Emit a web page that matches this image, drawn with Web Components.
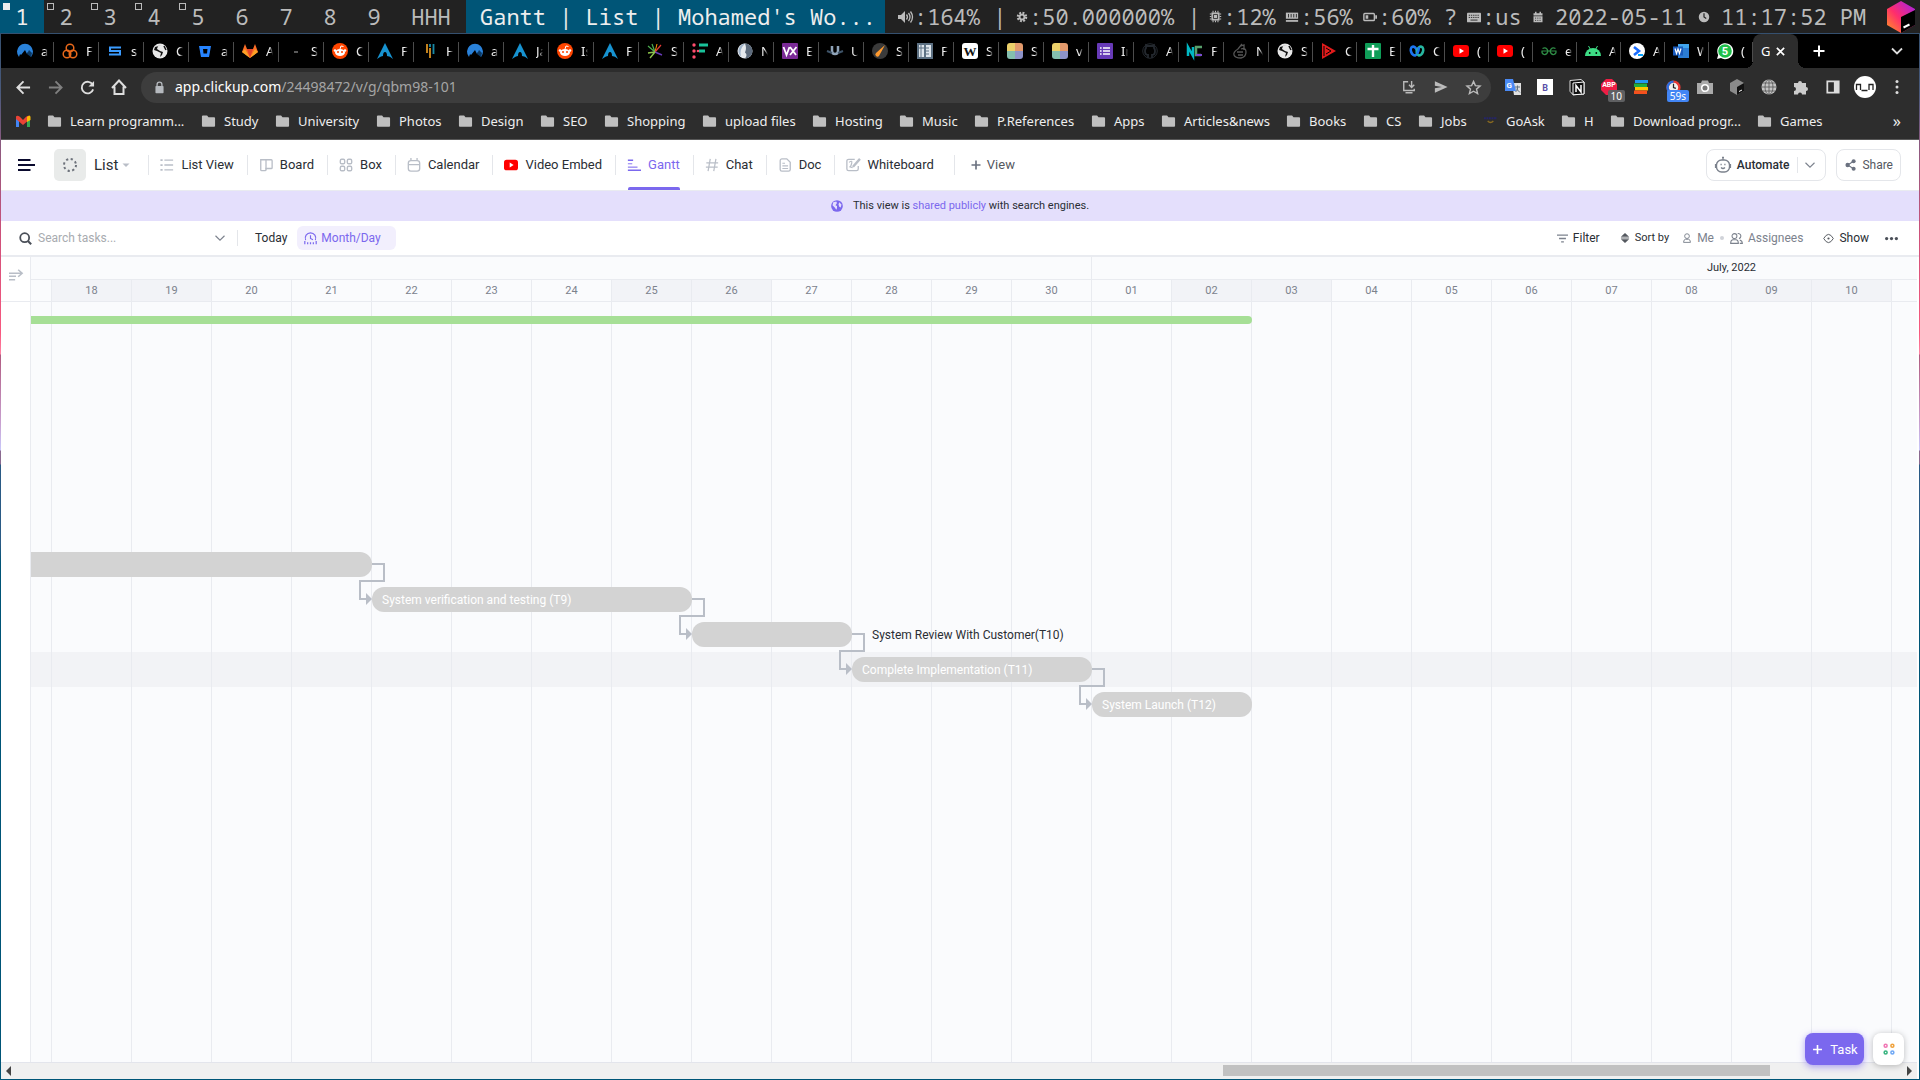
<!DOCTYPE html>
<html lang="en">
<head>
<meta charset="utf-8">
<title>Gantt | List | Mohamed's Workspace</title>
<style>
  html, body { margin: 0; height: 100%; }
  body { background: #222; overflow: hidden; font-family: Roboto, "Liberation Sans", sans-serif; }
</style>
</head>
<body>
<desk-top></desk-top>
<script>
const ICONS = {
  /* status bar */
  volume: '<path d="M1 6h3l4-4v12l-4-4H1z" fill="#bbb"/><path d="M9.500 5.500q2 2.500 0 5M11.500 4q3 4 0 8M13.500 2.500q4 5.500 0 11" stroke="#bbb" fill="none" stroke-width="1.300"/>',
  gear: '<circle cx="8" cy="8" r="4.500" fill="#bbb"/><circle cx="8" cy="8" r="5.500" fill="none" stroke="#bbb" stroke-width="3" stroke-dasharray="2.500 1.820"/><circle cx="8" cy="8" r="2" fill="#222"/>',
  cpu: '<path d="M3 3h10v10H3z" fill="#bbb"/><path d="M5.500 5.500h5v5h-5z" fill="none" stroke="#222"/><path d="M5 1v2M5 13v2M8 1v2M8 13v2M11 1v2M11 13v2M1 5h2M1 8h2M1 11h2M13 5h2M13 8h2M13 11h2" stroke="#bbb" stroke-width="1.300"/>',
  memory: '<path d="M1 3h14v7H1z" fill="#bbb"/><path d="M4 4.500v4M7 4.500v4M10 4.500v4M13 4.500v4" stroke="#222"/><path d="M1 11.500h14v2H1z" fill="#bbb"/>',
  battery: '<rect x="1" y="4" width="12" height="8" rx="1" fill="none" stroke="#bbb" stroke-width="1.600"/><path d="M3 6h3v4H3zM14 6h2v4h-2z" fill="#bbb"/>',
  keyboard: '<rect x="0" y="3" width="16" height="11" rx="1" fill="#bbb"/><path d="M2 6h12M2 8.500h12" stroke="#222" stroke-dasharray="1.500 1"/><path d="M4 11.500h8" stroke="#222"/>',
  calsolid: '<path d="M2 3h12v3H2zM2 7h12v8H2zM4 1h2v3H4zM10 1h2v3h-2z" fill="#bbb"/><path d="M4 9.500h8M4 12.500h8" stroke="#222" stroke-dasharray="1.500 1.500"/>',
  clocksolid: '<circle cx="8" cy="8" r="7" fill="#bbb"/><path d="M8 3v5l3 2" stroke="#222" fill="none" stroke-width="1.600"/>',
  toolbox: '<defs><linearGradient id="g" x1="0" y1="1" x2="1" y2="0"><stop offset="0" stop-color="#ff9a1f"/><stop offset=".45" stop-color="#ff2d6c"/><stop offset="1" stop-color="#a020f0"/></linearGradient></defs><path d="M14 0L28 8v16L14 32 0 24V8z" fill="url(#g)"/><path d="M14 16L28 9v15L14 32z" fill="#000"/><path d="M16.500 26.500l6-3" stroke="#fff" stroke-width="2"/>',
  /* favicons */
  nord: '<path d="M2 14a8 8 0 1 1 12 0l-3-5-1 2-2-4-4 5-1-1z" fill="#2a82da"/><path d="M10 11l4 3 1-4-3-3z" fill="#0b3a66"/>',
  rings: '<g fill="none" stroke="#e8681a" stroke-width="1.500"><circle cx="8" cy="5" r="3.800"/><circle cx="5" cy="11" r="3.800"/><circle cx="11" cy="11" r="3.800"/></g>',
  sline: '<path d="M14 4.500H3V8h10v3.500H2" fill="none" stroke="#3b9cff" stroke-width="2"/>',
  globe: '<circle cx="8" cy="8" r="7.500" fill="#e8e8e8"/><path d="M10 2L6 3 5 6l3 2 3 1-1 3-2 2 1-4-4-2-3-1 1-3z" fill="#111"/><path d="M12 3l2 4" stroke="#111" stroke-width="1.500"/>',
  bitbucket: '<path d="M2 3h12l-2 11H4z" fill="#2684ff"/><path d="M6 6h4.500L10 10.500H6.500z" fill="#000"/>',
  gitlab: '<path d="M8 15L0 9l3-8 2 5h6l2-5 3 8z" fill="#fc6d26"/><path d="M8 15L5 6h6z" fill="#e24329"/><path d="M0 9l3-3 5 9zM16 9l-3-3-5 9z" fill="#fca326"/>',
  dash: '<path d="M7 9h4" stroke="#777" stroke-width="1.500"/>',
  reddit: '<circle cx="8" cy="8" r="8" fill="#ff4500"/><ellipse cx="8" cy="9.500" rx="5" ry="3.500" fill="#fff"/><circle cx="3" cy="7.500" r="1.300" fill="#fff"/><circle cx="13" cy="7.500" r="1.300" fill="#fff"/><circle cx="6" cy="9" r="1" fill="#ff4500"/><circle cx="10" cy="9" r="1" fill="#ff4500"/><path d="M8 6l1-3 2.500.5" stroke="#fff" fill="none"/>',
  arch: '<path d="M8 0L0 16q4-3 6-3 0-4 2-4t2 4q3 0 6 3z" fill="#1793d1"/>',
  bars: '<path d="M5 1v9M8 5v10" stroke="#d89020" stroke-width="1.800"/><path d="M8 1v3M11.500 1v10" stroke="#1a8aa5" stroke-width="1.800"/>',
  splash: '<path d="M8 9L1 3M8 9L5 1" stroke="#4caf50" stroke-width="1.200"/><path d="M8 9L10 1" stroke="#ff9800"/><path d="M8 9L14 2" stroke="#e53935" stroke-width="1.200"/><path d="M8 9l7 3" stroke="#673ab7" stroke-width="1.400"/><path d="M8 9L1 10M8 9l-5 6" stroke="#8bc34a" stroke-width="1.400"/>',
  fdots: '<path d="M7 2h9M7 8h6" stroke="#19c29a" stroke-width="3"/><g fill="#ff4d6d"><circle cx="2" cy="2" r="1.700"/><circle cx="2" cy="8" r="1.700"/><circle cx="2" cy="14" r="1.700"/><circle cx="6" cy="8" r="1.300"/></g>',
  silver: '<circle cx="8" cy="8" r="7.500" fill="#e6eaee"/><path d="M8 .5a7.500 7.500 0 0 1 0 15q3-4 0-6 2-4 0-9z" fill="#5d6b7c"/><path d="M8 .5a7.500 7.500 0 0 0-4 13q-2-7 4-13z" fill="#9fb2c8"/>',
  vx: '<rect width="16" height="16" rx="1" fill="#7b2a97"/><path d="M1.500 4l3 8 3-8M8 4l6 8M14.500 4L8 12" stroke="#fff" stroke-width="1.800" fill="none"/>',
  umark: '<path d="M5 3v5q0 3 3 3t3-3V3" stroke="#8fa3b8" stroke-width="2.500" fill="none"/><path d="M0 8l5 2M16 8l-5 2" stroke="#3e5368" stroke-width="2"/>',
  comet: '<circle cx="8" cy="8" r="8" fill="#3a3a3a"/><path d="M13 2L4 10a2 2 0 0 0 3 3z" fill="#ff9a2e"/>',
  book: '<rect width="16" height="16" fill="#5d7183"/><path d="M2 2h5v12H2zM9 2h5v12H9z" fill="#dfe6ec"/><path d="M2 5h5M9 5h3M9 8h3M9 11h3M4 2v12" stroke="#5d7183"/>',
  wiki: '<rect width="16" height="16" rx="3" fill="#fff"/><text x="8" y="13" text-anchor="middle" font-family="Liberation Serif,serif" font-weight="700" font-size="13" fill="#111">W</text>',
  quad: '<path d="M0 3a3 3 0 0 1 3-3h5v8H0z" fill="#ecd06a"/><path d="M8 0h5a3 3 0 0 1 3 3v5H8z" fill="#e39a6c"/><path d="M0 8h8v8H3a3 3 0 0 1-3-3z" fill="#84bfae"/><path d="M8 8h8v5a3 3 0 0 1-3 3H8z" fill="#8e93c9"/>',
  forms: '<rect width="16" height="16" rx="1" fill="#673ab7"/><path d="M6 5h7M6 8h7M6 11h7" stroke="#fff" stroke-width="1.600"/><path d="M3 5h1.600M3 8h1.600M3 11h1.600" stroke="#fff" stroke-width="1.600"/>',
  github: '<path d="M6 15v-3q-3 0-3-4 0-2 1-3V2l3 1h2l3-1v3q1 1 1 3 0 4-3 4v3" stroke="#24292f" fill="none" stroke-width="1.800"/><circle cx="8" cy="8" r="7.300" fill="none" stroke="#24292f"/>',
  nc: '<path d="M1 13V4l5 9V4" stroke="#00b8c4" stroke-width="2.500" fill="none"/><path d="M15 4H9v8h5" stroke="#58a06b" stroke-width="2.500" fill="none"/><path d="M9 12h6" stroke="#7a4bd0" stroke-width="2"/>',
  gnu: '<path d="M10 1L6 6q-5 3-4 6t7 3q5-1 5-6T9 6M5 9h6M6 12h5M9 3l3-1v5" stroke="#555" fill="none" stroke-width="1.300"/>',
  redplay: '<path d="M1 0l14 8L1 16z" fill="#e11b1b"/><path d="M5 5l5 3-5 3M3 3v10" stroke="#000" fill="none"/>',
  sheet: '<rect width="16" height="16" rx="1" fill="#0f9d58"/><path d="M8 2v12M2.500 6h11" stroke="#fff" stroke-width="2.400"/>',
  webex: '<ellipse cx="5" cy="8" rx="3" ry="4.500" transform="rotate(-20 5 8)" stroke="#1c75f0" stroke-width="2.600" fill="none"/><ellipse cx="11" cy="8" rx="3" ry="4.500" transform="rotate(20 11 8)" stroke="#27b7a0" stroke-width="2.600" fill="none"/><path d="M8 11q2-3 2-7" stroke="#1c75f0" stroke-width="2.400" fill="none"/>',
  youtube: '<rect y="2" width="16" height="12" rx="3" fill="#f00"/><path d="M6.500 5.200v5.600L11 8z" fill="#fff"/>',
  gfg: '<path d="M1.500 5.500q4-2 5.500 2.500-1 4-4 3.500-2.500-1-2-3.500h14q.5 2.500-2 3.500-3 .5-4-3.500 1.500-4.500 5.500-2.500" stroke="#2f8d46" stroke-width="1.200" fill="none"/>',
  android: '<path d="M0 13a8 8 0 0 1 16 0z" fill="#3ddc84"/><path d="M3.500 3l2 3.500M12.500 3l-2 3.500" stroke="#3ddc84"/><circle cx="4.700" cy="10" r=".9" fill="#000"/><circle cx="11.300" cy="10" r=".9" fill="#000"/>',
  shell: '<circle cx="8" cy="8" r="8" fill="#fff"/><path d="M5 4l5 4-5 4" stroke="#1a6cff" stroke-width="2.600" fill="none"/><path d="M9 12h5" stroke="#00a2ff" stroke-width="2"/>',
  word: '<path d="M5 1h10a1 1 0 0 1 1 1v13H5z" fill="#2b7cd3"/><path d="M5 1h11v4H5z" fill="#41a5ee"/><path d="M0 3.500h10v9H0z" fill="#185abd"/><path d="M2 5.500l1.500 5L5 6l1.500 4.500L8 5.500" stroke="#fff" stroke-width="1.200" fill="none"/>',
  whats: '<path d="M0 16l1.200-4A8 8 0 1 1 4 15z" fill="#fff"/><circle cx="8" cy="8" r="6.800" fill="#1fbf4b"/><text x="8" y="12" text-anchor="middle" font-family="Roboto,sans-serif" font-size="11" font-weight="700" fill="#fff">5</text>',
  /* browser chrome */
  back: '<path d="M15 8H2M8 1.500L1.500 8 8 14.500" stroke="#dedede" stroke-width="2" fill="none"/>',
  forward: '<path d="M1 8h13M8 1.500L14.500 8 8 14.500" stroke="#808080" stroke-width="2" fill="none"/>',
  reload: '<path d="M13.500 5A6.200 6.200 0 1 0 14 10" stroke="#dedede" stroke-width="2" fill="none"/><path d="M15 1v6H9z" fill="#dedede"/>',
  home: '<path d="M1 9l7-7.500L15 9M3.500 7.500V15h9V7.500" stroke="#dedede" stroke-width="2" fill="none"/>',
  lock: '<rect x="3" y="6" width="10" height="9" rx="1" fill="#b5b9be"/><path d="M5 7V4.500a3 3 0 0 1 6 0V7" stroke="#b5b9be" stroke-width="1.600" fill="none"/>',
  install: '<path d="M7 2H2v10h12v-2M4 14.500h8M11 1v7M8 5.500L11 8.500 14 5.500" stroke="#bbb" stroke-width="1.600" fill="none"/>',
  send: '<path d="M1 1.500L15.500 8 1 14.500V9.500L9 8 1 6.500z" fill="#bbb"/>',
  star: '<path d="M8 1.500l2 4.500 5 .5-3.800 3.200 1.200 4.800L8 12l-4.400 2.500 1.200-4.800L1 6.500 6 6z" stroke="#bbb" stroke-width="1.500" fill="none"/>',
  translate: '<path d="M7 4h9v12H9z" fill="#e0e0e0"/><path d="M0 0h8l3 12H0z" fill="#4a8af4"/><text x="1.500" y="9" font-family="Roboto,sans-serif" font-weight="700" font-size="8" fill="#fff">G</text><path d="M10 8h5M12.500 6.500V8q1 3-2 5M11 9.500l4 4" stroke="#607080" fill="none"/>',
  bsquare: '<path d="M0 0h16v16H0z" fill="#fff"/><text x="8" y="11.500" text-anchor="middle" font-family="Roboto,sans-serif" font-weight="700" font-size="9" fill="#5a4fa8">B</text>',
  notion: '<path d="M1 1.500L12 .5l3 2.500v12l-11 .8-3-3.500z" fill="#111" stroke="#ddd"/><path d="M4 4l11-1v12l-11 .8z" fill="#111" stroke="#fff"/><path d="M7 13V6.500l5 6.500V6" stroke="#fff" stroke-width="1.500" fill="none"/>',
  abp: '<path d="M5 0h6l5 5v6l-5 5H5l-5-5V5z" fill="#ed1e45"/><text x="8" y="8" text-anchor="middle" font-family="Roboto,sans-serif" font-weight="700" font-size="7" fill="#fff">ABP</text>',
  stack: '<path d="M2 1h13v3H2z" fill="#2196f3"/><path d="M1 4.500h13v3.500H1z" fill="#1fae3c"/><path d="M2 8h13v3.500H2z" fill="#ffc400"/><path d="M1 11.500h13V15H1z" fill="#f4511e"/>',
  timer: '<circle cx="8" cy="8" r="6.300" fill="#eee" stroke="#e53935" stroke-width="2.600"/><path d="M8 1.700a6.300 6.300 0 0 0 0 12.600" fill="none" stroke="#2b6fe0" stroke-width="2.600"/><path d="M8 4v4l2.500 1" stroke="#222" fill="none" stroke-width="1.300"/>',
  camera: '<path d="M0 4h4l1-2.500h6L12 4h4v11H0z" fill="#aaa"/><circle cx="8" cy="9" r="3.300" fill="#777" stroke="#fff" stroke-width="1.600"/>',
  cube: '<path d="M8 0l7 4v8l-7 4-7-4V4z" fill="#8a8a8a"/><path d="M8 8l7-4v8l-7 4z" fill="#111"/><path d="M10 12.500l3-1.500" stroke="#fff"/>',
  world: '<circle cx="8" cy="8" r="7.500" fill="#c4c4c4"/><path d="M8 0v16M0 8h16M1.500 4h13M1.500 12h13" stroke="#555" stroke-width=".8" fill="none"/><ellipse cx="8" cy="8" rx="4" ry="7.500" stroke="#555" stroke-width=".8" fill="none"/>',
  puzzle: '<path d="M1 4h4a2 2 0 1 1 4 0h4v4a2 2 0 1 1 0 4v3.500H9a2 2 0 0 0-4 0H1V12a2 2 0 0 0 0-4z" fill="#ccc"/>',
  panel: '<path d="M1.500 1.500h13v13h-13z" fill="none" stroke="#ddd" stroke-width="2"/><path d="M9 2h5.500v12H9z" fill="#ddd"/>',
  avatar: '<circle cx="11" cy="11" r="11" fill="#fff"/><path d="M2.500 14V8.500h4V14M7.500 14.500h6M15 14V8.500h4V14" stroke="#222" stroke-width="1.300" fill="none"/>',
  kebab: '<g fill="#ddd"><circle cx="8" cy="2.500" r="1.500"/><circle cx="8" cy="8" r="1.500"/><circle cx="8" cy="13.500" r="1.500"/></g>',
  plusw: '<path d="M8 2.500v11M2.500 8h11" stroke="#fff" stroke-width="2"/>',
  xw: '<path d="M3.500 3.500l9 9M12.500 3.500l-9 9" stroke="#fff" stroke-width="2"/>',
  chevw: '<path d="M3 5.500l5 5 5-5" stroke="#ddd" stroke-width="1.800" fill="none"/>',
  gmail: '<path d="M1 3.500V14h3V8z" fill="#4285f4"/><path d="M15 3.500V14h-3V8z" fill="#34a853"/><path d="M1 3.500Q3 1 8 7q5-6 7-3.500V6l-7 6-7-6z" fill="#ea4335"/><path d="M12 4q3-3 3.500 0v3L12 9z" fill="#fbbc04"/>',
  folder: '<path d="M1 3a1 1 0 0 1 1-1h4.500L8 4h6a1 1 0 0 1 1 1v8a1 1 0 0 1-1 1H2a1 1 0 0 1-1-1z" fill="#bfbfbf"/>',
  goask: '<path d="M1 5h14" stroke="#25256a" stroke-width="2" stroke-dasharray="2 .7"/><path d="M5 8q3 3 6 0" stroke="#8a6a20" stroke-width="1.500" fill="none"/>',
  /* app */
  burger: '<path d="M0 3h12.500M0 8h17M0 13h12.500" stroke="#0a0a2e" stroke-width="2"/>',
  dashed: '<circle cx="8" cy="8" r="6" fill="none" stroke="#6d727b" stroke-width="2" stroke-dasharray="2.200 2.510"/>',
  caret: '<path d="M1 5h14L8 12z" fill="#b9bec7"/>',
  list: '<path d="M5 2.500h10M5 8h10M5 13.500h10" stroke="#b9bec7" stroke-width="1.500"/><path d="M.5 2.500h2.500M.5 8h2.500M.5 13.500h2.500" stroke="#b9bec7" stroke-width="2"/>',
  board: '<path d="M2 2h12a1 1 0 0 1 1 1v8a1 1 0 0 1-1 1H8v1.500a1 1 0 0 1-1 1H3a1 1 0 0 1-1-1z" fill="none" stroke="#b9bec7" stroke-width="1.500"/><path d="M8 2v11" stroke="#b9bec7" stroke-width="1.500"/>',
  box: '<g fill="none" stroke="#b9bec7" stroke-width="1.600"><rect x="1.500" y="1.500" width="5" height="5" rx="1.500"/><rect x="9.500" y="1.500" width="5" height="5" rx="1.500"/><rect x="1.500" y="9.500" width="5" height="5" rx="1.500"/><rect x="9.500" y="9.500" width="5" height="5" rx="1.500"/></g>',
  calendar: '<rect x="1.500" y="3" width="13" height="12" rx="3" fill="none" stroke="#b9bec7" stroke-width="1.500"/><path d="M2 7.500h12M4.500 0v3M11.500 0v3" stroke="#b9bec7" stroke-width="1.500"/>',
  gantt: '<path d="M1 2.500h6M1 14h15" stroke="#7b68ee" stroke-width="1.800"/><path d="M1 6.500h5" stroke="#a99cf4" stroke-width="1.600"/><path d="M1 10.500h11" stroke="#a99cf4" stroke-width="1.800"/>',
  hash: '<path d="M6 1L3.500 15M12.500 1L10 15M1.500 5.500h13.500M1 10.500h13.500" stroke="#b9bec7" stroke-width="1.400"/>',
  doc: '<path d="M2.500 3a2 2 0 0 1 2-2H10l4 4v8a2 2 0 0 1-2 2H4.500a2 2 0 0 1-2-2z" fill="none" stroke="#b9bec7" stroke-width="1.500"/><path d="M5 6h3M5 9h6.500M5 12h6.500" stroke="#b9bec7" stroke-width="1.300"/>',
  white: '<path d="M10 1.500H3a2 2 0 0 0-2 2v9a2 2 0 0 0 2 2h9a2 2 0 0 0 2-2V9" fill="none" stroke="#b9bec7" stroke-width="1.500"/><path d="M3.500 5q4-3 3 1t-2 4 3 1M8 9l7-8 1 1-7 8H8z" fill="none" stroke="#b9bec7" stroke-width="1.400"/>',
  plusg: '<path d="M8 2v12M2 8h12" stroke="#6b7280" stroke-width="2.200"/>',
  robot: '<rect x="1.500" y="3" width="13" height="12" rx="5" fill="none" stroke="#7c828d" stroke-width="1.400"/><path d="M8 3V.5M.5 7v4M15.500 7v4M6 10.500q2 2 4 0" stroke="#7c828d" stroke-width="1.200" fill="none"/><path d="M5.500 7.500h1.200M9.300 7.500h1.200M7 .5h2" stroke="#7c828d" stroke-width="1.500"/>',
  chev: '<path d="M2 5l6 6 6-6" stroke="#7c828d" stroke-width="1.500" fill="none"/>',
  share: '<g fill="#6b7280"><circle cx="3.500" cy="8" r="2.900"/><circle cx="11.500" cy="3" r="2.700"/><circle cx="11.500" cy="13" r="2.700"/></g><path d="M11.500 3l-8 5 8 5" stroke="#6b7280" stroke-width="1.400" fill="none"/>',
  earth: '<circle cx="8" cy="8" r="7.800" fill="#7b68ee"/><path d="M3 3l4-1 1 2-2 3 2 1v3l-1 2-2-3-3-3zM11 3l3 3-1 4-2-1-1-3z" fill="#e4dffc"/>',
  search: '<circle cx="7" cy="7" r="5.500" fill="none" stroke="#4a4f58" stroke-width="2.200"/><path d="M11 11l4 4" stroke="#4a4f58" stroke-width="2.500"/>',
  period: '<path d="M2 10a6.500 6.500 0 1 1 12 0M8 4v4l3 1.500" fill="none" stroke="#7b68ee" stroke-width="1.400"/><path d="M1 11v4M4.500 12.500V15M8 12.500V15M11.500 12.500V15M15 11v4" stroke="#7b68ee" stroke-width="1.500"/>',
  filter: '<path d="M0 3h16M3 8h10M6 13h4" stroke="#7c828d" stroke-width="1.900"/>',
  sort: '<path d="M8 0l6.500 6h-13zM8 16l6.500-6h-13z" fill="#54585f"/><path d="M1.500 8h13" stroke="#54585f" stroke-width="1.500"/>',
  me: '<circle cx="8" cy="5" r="3.800" fill="none" stroke="#7c828d" stroke-width="1.500"/><path d="M2.500 15q0-4.500 3-5h5q3 .5 3 5z" fill="none" stroke="#7c828d" stroke-width="1.500"/>',
  people: '<circle cx="5.500" cy="5" r="3" fill="none" stroke="#7c828d" stroke-width="1.300"/><path d="M.8 14q0-4 2.500-4.500h4.500q2.500.5 2.500 4.500zM9.500 2a3 3 0 0 1 1.500 6M12 10q3 .5 3.200 4H12" fill="none" stroke="#7c828d" stroke-width="1.300"/>',
  eye: '<path d="M1 8q7-12 14 0-7 12-14 0z" fill="none" stroke="#54585f" stroke-width="1.400"/><circle cx="8" cy="8" r="1.600" fill="#54585f"/>',
  dots: '<g fill="#4a4f58"><circle cx="2" cy="8" r="2"/><circle cx="8" cy="8" r="2"/><circle cx="14" cy="8" r="2"/></g>',
  expand: '<path d="M0 6h14M0 9.500h8M0 13.500h7M10.500 2l4.500 4-4.500 4" stroke="#b9bec7" stroke-width="1.800" fill="none"/>',
  apps: '<g fill="none" stroke-width="2"><circle cx="3.500" cy="3.500" r="2" stroke="#f076b4"/><circle cx="12.500" cy="3.500" r="2" stroke="#f0a23c"/><circle cx="3.500" cy="12.500" r="2" stroke="#35b37e"/><circle cx="12.500" cy="12.500" r="2" stroke="#6fa8f5"/></g>'
};
const BOX = { toolbox: '0 0 28 32', avatar: '0 0 22 22', burger: '0 0 17 16' };

class Base extends HTMLElement {
  constructor() {
    super();
    this.attachShadow({ mode: 'open' });
  }
  connectedCallback() {
    this.shadowRoot.innerHTML = `<style>*{box-sizing:border-box}button{font:inherit;color:inherit;background:none;border:0;padding:0;margin:0}a{color:inherit;text-decoration:none}${this.css()}</style>${this.html()}`;
  }
}
const ic = (name, w = 16, h = w) => `<ui-icon name="${name}" style="--w:${w}px;--h:${h}px"></ui-icon>`;

customElements.define('ui-icon', class extends Base {
  css() { return ':host{display:block;flex:none;width:var(--w);height:var(--h)}svg{display:block;width:100%;height:100%;overflow:visible}'; }
  html() { const n = this.getAttribute('name'); return `<svg viewBox="${BOX[n] || '0 0 16 16'}" aria-hidden="true">${ICONS[n]}</svg>`; }
});

/* Window manager bar */
customElements.define('status-bar', class extends Base {
  css() { return `
    :host{display:flex;flex:none;height:33px;background:#222;color:#bbb;font:22px/33px "Noto Sans Mono","DejaVu Sans Mono",monospace;white-space:pre}
    .tag{position:relative;width:44px;text-align:center;line-height:33px}
    .tag.wide{width:70px}
    .tag.on{background:#057;color:#eee}
    .tag i{position:absolute;left:3px;top:3px;width:7px;height:7px;border:1px solid #bbb}
    .tag.on i{background:#eee;border-color:#eee}
    h1{margin:0;padding:0 14px;width:419px;background:#057;color:#eee;font:inherit;overflow:hidden}
    .status{flex:1;display:grid;grid-template-columns:119px 193px 76px 78px 104px 65px 166px 189px 28px;padding-left:12px;justify-content:start}
    .status span{display:flex;align-items:center;gap:1px}
    .status b{font-weight:400;padding-left:10px}`; }
  html() {
    const tags = [1,2,3,4,5,6,7,8,9].map(n => `<button class="tag${n === 1 ? ' on' : ''}">${n < 6 ? '<i></i>' : ''}${n}</button>`).join('');
    const parts = [['volume',':164% |',16],['gear',':50.000000% |',12],['cpu',':12%',13],['memory',':56%',14],['battery',':60% ?',14],['keyboard',':us',14],['calsolid',' 2022-05-11',12],['clocksolid',' 11:17:52 PM',12]]
      .map(([i, t, w]) => `<span>${ic(i, w)}${t.startsWith(' ') ? `<b>${t.trim()}</b>` : t}</span>`).join('');
    return `${tags}<button class="tag wide">HHH</button><h1>Gantt | List | Mohamed's Wo...</h1><div class="status">${parts}<span>${ic('toolbox', 28, 32)}</span></div>`;
  }
});

customElements.define('browser-tab', class extends Base {
  css() { return `
    :host{display:flex;align-items:center;flex:0 0 var(--tab,45px);height:34px;padding-left:8px;gap:8px;color:#eee;font:13px/16px "Noto Sans",sans-serif;position:relative}
    :host::after{content:"";position:absolute;right:0;top:8px;height:20px;width:1px;background:#4c4c4c}
    .t{width:7px;overflow:hidden;white-space:nowrap;-webkit-mask:linear-gradient(90deg,#000 50%,transparent)}`; }
  html() { return `${ic(this.getAttribute('icon'))}<span class="t"><slot></slot></span>`; }
});

customElements.define('tab-strip', class extends Base {
  css() { return `
    :host{display:flex;flex:none;height:34px;background:#000;padding-left:8px}
    .narrow{--tab:44px}
    .active{position:relative;display:flex;align-items:center;justify-content:space-between;width:45px;padding:0 11px 0 8px;background:#2d2d2d;border-radius:8px 8px 0 0;color:#fff;font:13px/16px "Noto Sans",sans-serif}
    .active::before,.active::after{content:"";position:absolute;bottom:0;width:8px;height:8px}
    .active::before{left:-8px;background:radial-gradient(circle at 0 0,transparent 8px,#2d2d2d 8px)}
    .active::after{right:-8px;background:radial-gradient(circle at 100% 0,transparent 8px,#2d2d2d 8px)}
    .active span{width:9px;overflow:hidden}
    .new{display:grid;place-items:center;width:42px}
    .more{display:grid;place-items:center;width:44px;margin-left:auto}`; }
  html() {
    const tabs = 'nord a,rings F,sline s,globe C,bitbucket a,gitlab A,dash S,reddit C,arch F,bars H,nord a,arch Ja,reddit Is,arch F,splash S,fdots A,silver N,vx E,umark U,comet S,book F,wiki S,quad S,quad v,forms In,github A,nc F,gnu N,globe S,redplay C,sheet E,webex C,youtube (,youtube (,gfg e,android A,shell A,word W,whats ('.split(',')
      .map((s, i) => { const [a, b] = s.split(' '); return `<browser-tab icon="${a}"${i > 27 ? ' class="narrow"' : ''}>${b}</browser-tab>`; }).join('');
    return `${tabs}<div class="active"><span>G</span><button aria-label="Close tab">${ic('xw', 13)}</button></div><button class="new" aria-label="New tab">${ic('plusw')}</button><button class="more" aria-label="Search tabs">${ic('chevw')}</button>`;
  }
});

customElements.define('address-bar', class extends Base {
  css() { return `
    :host{display:flex;flex:none;align-items:center;height:38px;background:#2d2d2d;padding:0 6px;font:14px/20px "Noto Sans",sans-serif}
    button{position:relative;display:grid;place-items:center;width:32px;height:32px}
    .omni{flex:1;display:flex;align-items:center;height:31px;margin:0 6px;padding:0 2px 0 12px;border-radius:16px;background:#3d3d3d;color:#a5a5a5}
    .omni button{width:32px}
    .url{flex:1;margin-left:9px;white-space:nowrap}
    .url b{font-weight:400;color:#fff}
    .badge{position:absolute;right:0;top:19px;padding:0 3px;border-radius:2px;background:#5f6062;color:#fff;font:10px/12px "Noto Sans",sans-serif}
    .badge.blue{background:#4285f4}`; }
  html() {
    const b = (n, l, w = 16, x = '') => `<button aria-label="${l}">${ic(n, w)}${x}</button>`;
    return b('back','Back',15) + b('forward','Forward',15) + b('reload','Reload',15) + b('home','Home') +
      `<div class="omni">${ic('lock', 13)}<a class="url" href="#"><b>app.clickup.com</b>/24498472/v/g/qbm98-101</a>${b('install','Install',14)}${b('send','Send',14)}${b('star','Bookmark',15)}</div>` +
      b('translate','Translate') + b('bsquare','B') + b('notion','Notion') + b('abp','Adblock',16,'<span class="badge">10</span>') + b('stack','Stack') + b('timer','Timer',15,'<span class="badge blue">59s</span>') + b('camera','Camera') + b('cube','Toolbox') + b('world','World') + b('puzzle','Extensions') + b('panel','Side panel',14) + b('avatar','Profile',22) + b('kebab','Menu');
  }
});

customElements.define('bookmark-bar', class extends Base {
  css() { return `
    :host{display:flex;box-sizing:border-box;flex:none;align-items:center;height:34px;background:#2d2d2d;border-bottom:1px solid #585858;padding:0 18px 3px 14px;gap:16px;color:#eee;font:13px/18px "Noto Sans",sans-serif;white-space:nowrap}
    a{display:flex;align-items:center;gap:8px;flex:none}
    .more{margin-left:auto;font-size:16px}`; }
  html() {
    const names = ['Learn programm...','Study','University','Photos','Design','SEO','Shopping','upload files','Hosting','Music','P.References','Apps','Articles&amp;news','Books','CS','Jobs','GoAsk','H','Download progr...','Games'];
    return `<a href="#" aria-label="Gmail">${ic('gmail')}</a>` + names.map(n => `<a href="#">${ic(n === 'GoAsk' ? 'goask' : 'folder', 15, 16)}<span>${n}</span></a>`).join('') + '<button class="more" aria-label="More bookmarks">»</button>';
  }
  connectedCallback() {
    super.connectedCallback();
    /* Labels take whole-pixel widths, as native toolbars do. */
    for (const s of this.shadowRoot.querySelectorAll('a span'))
      s.style.width = Math.ceil(s.getBoundingClientRect().width) + 'px';
  }
});

/* ClickUp view header */
customElements.define('view-tab', class extends Base {
  css() { return `
    :host{display:block;flex:none}
    a{position:relative;display:flex;align-items:center;gap:7px;height:100%;padding:0 13px 0 12px}
    a::before{content:"";position:absolute;left:0;top:15px;height:20px;width:1px;background:#e4e6ea}
    :host([active]) a{color:#7b68ee}
    :host([active]) a::after{content:"";position:absolute;left:13px;right:13px;bottom:0;height:3px;border-radius:2px 2px 0 0;background:#7b68ee}`; }
  html() { return `<a href="#">${ic(this.getAttribute('icon'), 14)}<span><slot></slot></span></a>`; }
});

customElements.define('view-header', class extends Base {
  css() { return `
    :host{display:flex;box-sizing:border-box;flex:none;height:51px;background:#fff;border-bottom:1px solid #e9ebf0;color:#2a2e34;font-size:13px;line-height:18px;padding:0 18px 0 17px;white-space:nowrap}
    .burger,.name,.space{display:flex;align-items:center}
    .space{align-self:center;justify-content:center;width:32px;height:32px;margin:0 8px 0 19px;border-radius:5px;background:#e9ebea}
    .name{font-size:15px;gap:4px;margin-right:18px}
    .add{display:flex;align-items:center;gap:5px;padding-left:16px;margin:0 0 0 7px;position:relative;color:#54585f}
    .add::before{content:"";position:absolute;left:0;top:15px;height:20px;width:1px;background:#e4e6ea}
    .right{margin-left:auto;display:flex;align-items:center;gap:10px;font-size:12px}
    .btn{display:flex;align-items:center;height:32px;border:1px solid #e4e6ea;border-radius:8px}
    .auto{font-weight:500;padding:0 9px 0 8px;gap:6px}
    .auto i{width:1px;height:16px;background:#e4e6ea;margin:0 0 0 2px}
    .share{color:#54585f;padding:0 7px 0 8px;gap:5px}`; }
  html() {
    return `<button class="burger" aria-label="Menu">${ic('burger', 17, 16)}</button><button class="space" aria-label="Space">${ic('dashed', 16)}</button><button class="name">List ${ic('caret', 8)}</button>` +
      [['list','List View'],['board','Board'],['box','Box'],['calendar','Calendar'],['youtube','Video Embed'],['gantt','Gantt'],['hash','Chat'],['doc','Doc'],['white','Whiteboard']].map(([i, t]) => `<view-tab icon="${i}"${t === 'Gantt' ? ' active' : ''}>${t}</view-tab>`).join('') +
      `<button class="add">${ic('plusg', 12)}View</button><div class="right"><div class="btn auto">${ic('robot', 16)}<button>Automate</button><i></i><button aria-label="Automate options">${ic('chev', 12)}</button></div><button class="btn share">${ic('share', 12)}Share</button></div>`;
  }
});

customElements.define('public-banner', class extends Base {
  css() { return `
    :host{display:flex;flex:none;align-items:center;justify-content:center;gap:10px;height:30px;background:#e4dffc;color:#2a2e34;font-size:11px;line-height:16px}
    a{color:#7b68ee}`; }
  html() { return `${ic('earth', 12)}<span>This view is <a href="#">shared publicly</a> with search engines.</span>`; }
});

customElements.define('gantt-toolbar', class extends Base {
  css() { return `
    :host{display:flex;box-sizing:border-box;flex:none;align-items:center;height:36px;background:#fff;border-bottom:2px solid #e9ebf0;padding:0 21px 0 18px;color:#2a2e34;font-size:12px;line-height:16px;white-space:nowrap}
    .search{display:flex;align-items:center;gap:6px;width:207px}
    input{flex:1;min-width:0;border:0;padding:0;outline:0;background:none;font:inherit}
    input::placeholder{color:#a8abb0;opacity:1}
    .sep{width:1px;height:16px;background:#e4e6ea;margin:0 17px 0 11px}
    .pill{display:flex;align-items:center;gap:4px;height:24px;width:99px;margin-left:10px;padding-left:7px;border-radius:6px;background:#f2effd;color:#7b68ee}
    .right{margin-left:auto;display:flex;align-items:center}
    .right button{display:flex;align-items:center;gap:5px;margin-left:20px}
    .right .sm{font-size:11px}
    .right .me{margin-left:13px;color:#7c828d}
    .dot{width:4px;height:4px;border-radius:2px;background:#d0d3d9;margin:0 6px}
    .right .as{margin-left:0;color:#7c828d}
    .right .more{margin-left:16px}`; }
  html() {
    return `<label class="search">${ic('search', 13)}<input type="text" placeholder="Search tasks..." aria-label="Search tasks">${ic('chev', 12)}</label><span class="sep"></span><button>Today</button><button class="pill">${ic('period', 13)}Month/Day</button>
    <div class="right"><button>${ic('filter', 11)}Filter</button><button class="sm">${ic('sort', 10, 12)}Sort by</button><button class="me">${ic('me', 10, 12)}Me</button><span class="dot"></span><button class="as">${ic('people', 13)}Assignees</button><button>${ic('eye', 11)}Show</button><button class="more" aria-label="More">${ic('dots', 13)}</button></div>`;
  }
});

customElements.define('gantt-bar', class extends Base {
  css() { return `
    :host{display:block;position:relative;height:25px;margin:5px -1px 5px 1px;border-radius:12px;background:#d3d3d3;color:#fff;font-size:12px;line-height:26px;padding-left:10px;white-space:nowrap}
    :host([open]){margin-left:0;border-radius:0 12px 12px 0}
    svg{position:absolute;left:100%;top:0;width:14px;height:54px;overflow:visible}`; }
  html() { return `<slot></slot>${this.hasAttribute('linked') ? '<svg viewBox="0 0 14 54" aria-hidden="true"><path d="M0 12H12V29H-12V47H-5" fill="none" stroke="#b9bec7" stroke-width="2"/><path d="M-6 41L0 47L-6 53z" fill="#b9bec7"/></svg>' : ''}`; }
});

customElements.define('gantt-chart', class extends Base {
  css() { return `
    :host{flex:1;min-height:0;display:flex;flex-direction:column;background:#fff;padding-right:2px;position:relative}
    .main{flex:1;min-height:0;display:flex}
    .side{flex:0 0 30px;border-right:1px solid #e9ebf0}
    .side button{display:block;height:45px;width:100%;padding:11px 0 20px 8px;border-bottom:1px solid #e9ebf0}
    .time{flex:1;min-width:0;display:flex;flex-direction:column;background:#fafbfd;overflow:hidden}
    .months,.days{display:flex;flex:none}
    .months{height:23px;border-bottom:1px solid #e9ebf0;color:#2a2e34;font-size:11px;line-height:22px}
    .months span:first-child{flex:0 0 1060px}
    .months span:last-child{flex:0 0 1280px;text-align:center;border-left:1px solid #e9ebf0}
    .days{height:22px;border-bottom:1px solid #e9ebf0;color:#7c828d;font-size:11px;line-height:21px;text-align:center}
    .days span{flex:0 0 80px;border-left:1px solid #e9ebf0}
    .days span.off{background:#f2f3f7}
    .days span:first-child{flex-basis:20px;border:0}
    .days span:last-child{flex:1}
    .rows{flex:1;display:grid;grid-template-columns:20px repeat(23,80px) 1fr;grid-auto-rows:35px;background:repeating-linear-gradient(90deg,#e9ebf0 0 1px,transparent 1px 80px) 20px 0 no-repeat}
    .hover{grid-area:11/1/12/-1;background:rgba(234,235,240,.5)}
    .total{grid-area:1/1/2/17;height:8px;margin:14px -1px 0 0;border-radius:0 4px 4px 0;background:#a6df96}
    .label{grid-area:10/12/11/16;margin-left:21px;color:#2a2e34;font-size:12px;line-height:36px}
    .scroll{flex:none;height:17px;display:flex;align-items:center;background:#f0f0f0;border-top:1px solid #e3e5ec;padding:0 5px 1px}
    .scroll i{border:5px solid transparent;border-right-color:#444;border-left-width:0}
    .scroll i:last-child{border:5px solid transparent;border-left-color:#444;border-right-width:0;margin-left:auto}
    .thumb{flex:0 0 28.700%;margin-left:63.600%;height:11px;background:#c1c1c1}
    .float{position:absolute;right:15px;bottom:14px;display:flex;gap:9px;font-size:13px}
    .float button{display:flex;align-items:center;justify-content:center;height:32px}
    .task{gap:6px;width:59px;border-radius:8px;background:#7b68ee;color:#fff;box-shadow:0 2px 7px rgba(123,104,238,.6)}
    .grid{width:31px;border-radius:8px;background:#fff;box-shadow:0 1px 6px rgba(0,0,0,.25)}`; }
  html() {
    const off = ['18','19','25','26','02','03','09','10'];
    const days = ['18','19','20','21','22','23','24','25','26','27','28','29','30','01','02','03','04','05','06','07','08','09','10'];
    return `<div class="main"><div class="side"><button aria-label="Show sidebar">${ic('expand', 14)}</button></div>
      <div class="time"><div class="months"><span></span><span>July, 2022</span></div>
      <div class="days"><span></span>${days.map(d => `<span${off.includes(d) ? ' class="off"' : ''}>${d}</span>`).join('')}<span></span></div>
      <div class="rows"><div class="hover"></div><div class="total"></div>
        <gantt-bar open linked style="grid-area:8/1/9/6"></gantt-bar>
        <gantt-bar linked style="grid-area:9/6/10/10">System verification and testing (T9)</gantt-bar>
        <gantt-bar linked style="grid-area:10/10/11/12"></gantt-bar><span class="label">System Review With Customer(T10)</span>
        <gantt-bar linked style="grid-area:11/12/12/15">Complete Implementation (T11)</gantt-bar>
        <gantt-bar style="grid-area:12/15/13/17">System Launch (T12)</gantt-bar>
      </div></div></div>
      <div class="scroll"><i></i><div class="thumb"></div><i></i></div>
      <div class="float"><button class="task">${ic('plusw', 13)}Task</button><button class="grid" aria-label="Apps">${ic('apps', 12)}</button></div>`;
  }
});

customElements.define('desk-top', class extends Base {
  css() { return `
    :host{display:flex;flex-direction:column;height:100vh}
    .window{flex:1;min-height:0;display:flex;flex-direction:column;padding:1px;
      background:linear-gradient(#35506f 0,#4a5a7c 60px,#8a5a80 110px,#d0507a 205px,#f8587f 300px,#ff86a6 321px,#b05a80 322px,#c8a0d0 390px,#c8c8fa 417px,#8a6a90 418px,#8a6a90 431px,#2a5a85 432px,#2a5a85 510px,#057 530px)}`; }
  html() { return `<status-bar></status-bar><div class="window"><tab-strip></tab-strip><address-bar></address-bar><bookmark-bar></bookmark-bar><view-header></view-header><public-banner></public-banner><gantt-toolbar></gantt-toolbar><gantt-chart></gantt-chart></div>`; }
});
</script>
</body>
</html>
